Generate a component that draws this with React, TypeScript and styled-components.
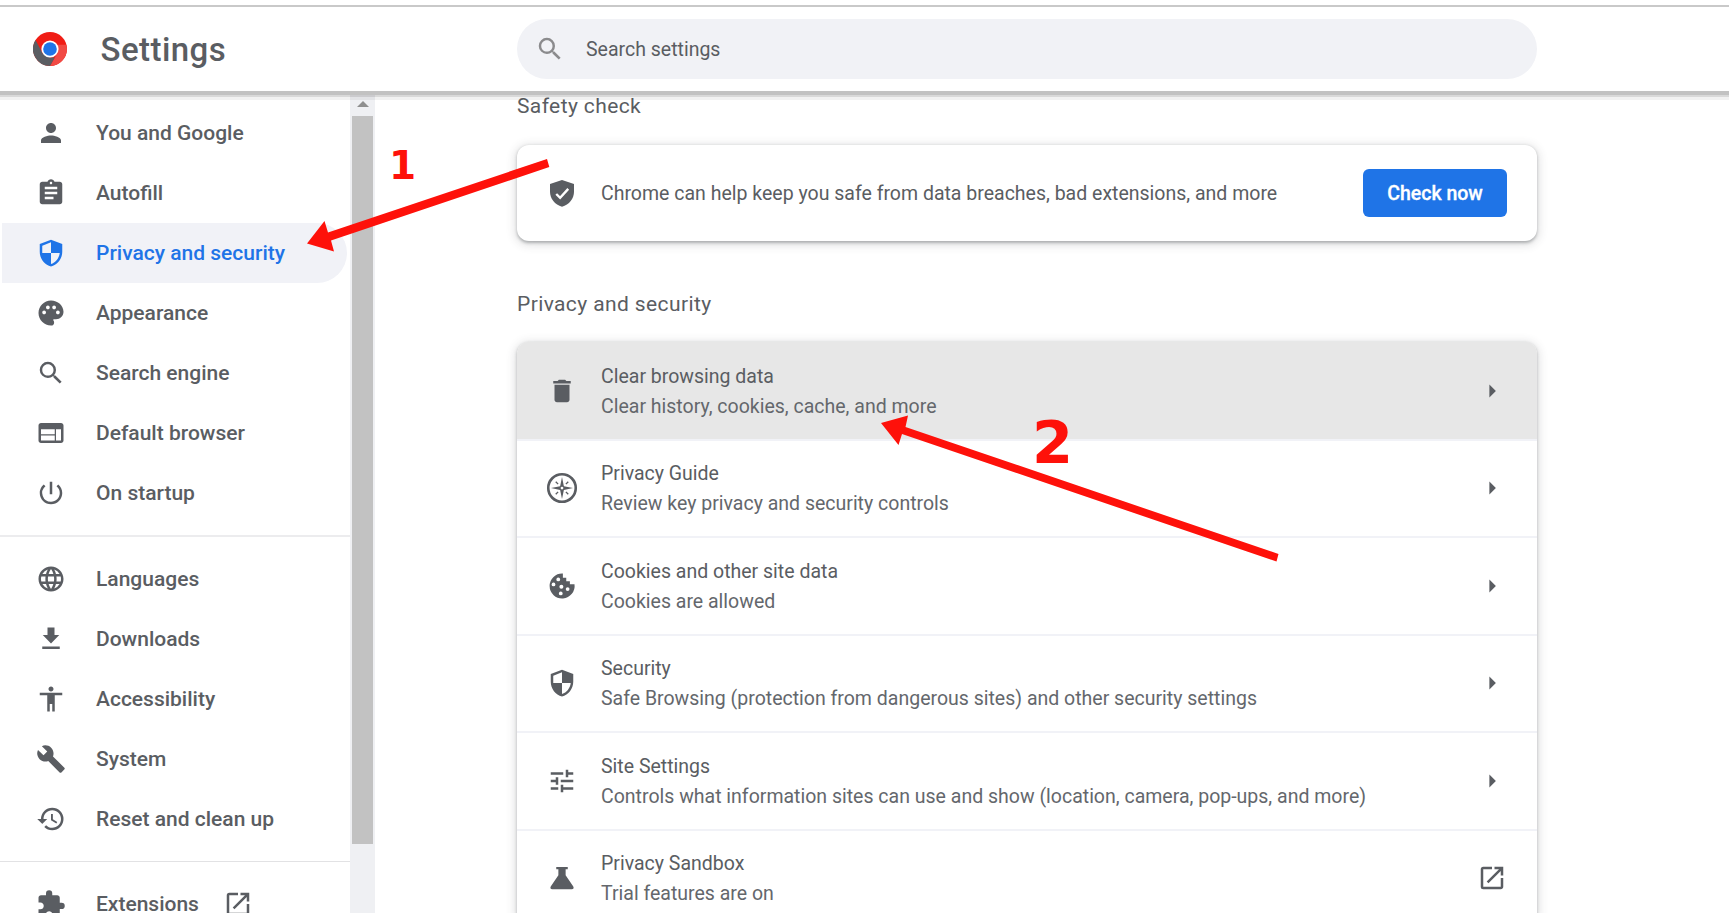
import React from 'react';
import styled, { createGlobalStyle } from 'styled-components';
import {
  MdPerson, MdAssignment, MdPalette, MdSearch, MdWeb, MdPowerSettingsNew, MdLanguage,
  MdAccessibility, MdBuild, MdHistory, MdExtension, MdLaunch, MdDelete, MdTune,
} from 'react-icons/md';

const ink = '#5a5d62';
const blue = '#1f74e7';
const red = '#fe110a';

const GlobalStyle = createGlobalStyle`
  * { box-sizing: border-box; }
  body { margin: 0; background: #fff; overflow: hidden; }
`;

const Page = styled.div`
  position: relative;
  width: 1729px;
  height: 913px;
  display: flex;
  flex-direction: column;
  overflow: hidden;
  padding-top: 5px;
  background: #fff;
  color: ${ink};
  font-family: Roboto, "Liberation Sans", sans-serif;
`;

const Header = styled.header`
  position: relative;
  z-index: 1;
  flex: none;
  height: 86px;
  display: flex;
  align-items: center;
  border-top: 2px solid #c9c9c9;
  background: #fff;
  box-shadow: 0 4px 0 #c2c2c2, 0 6px 0 rgba(0, 0, 0, 0.1), 0 9px 0 rgba(0, 0, 0, 0.05);
`;

const Brand = styled.div`
  width: 517px;
  display: flex;
  align-items: center;
  padding-left: 33px;
  gap: 33.5px;
`;

const Title = styled.h1`
  margin: 0;
  padding-top: 2px;
  font-size: 33px;
  font-weight: 500;
  line-height: 40px;
  letter-spacing: 0.45px;
`;

const SearchBox = styled.div`
  width: 1020px;
  height: 60px;
  border-radius: 30px;
  display: flex;
  align-items: center;
  gap: 21px;
  padding-left: 18px;
  background: #f1f2f6;
  font-size: 19.5px;
  svg { color: #8b8b8d; }
`;

const Body = styled.div`
  flex: 1;
  min-height: 0;
  display: flex;
`;

const Sidebar = styled.nav`
  width: 350px;
  flex: none;
  padding: 12px 3px 0 2px;
  overflow: hidden;
`;

const NavItem = styled.a<{ $active?: boolean }>`
  height: 60px;
  display: flex;
  align-items: center;
  gap: 30px;
  padding-left: 34px;
  border-radius: 0 30px 30px 0;
  background: ${p => (p.$active ? '#f1f2f7' : 'transparent')};
  color: ${p => (p.$active ? blue : ink)};
  font-size: 21px;
  font-weight: 500;
  line-height: 30px;
  white-space: nowrap;
`;

const NavExtra = styled.span`
  display: flex;
  margin-left: -6px;
`;

const NavLine = styled.div<{ $thick?: boolean }>`
  height: ${p => (p.$thick ? 2 : 1)}px;
  margin: 12px -3px 12px -2px;
  background: ${p => (p.$thick ? '#ececee' : '#e2e2e4')};
`;

const ScrollTrack = styled.div`
  width: 25px;
  flex: none;
  display: flex;
  flex-direction: column;
  align-items: center;
  padding: 10px 2px 0;
  background: #eff0f3;
`;

const ScrollArrow = styled.svg`
  width: 12px;
  height: 6px;
  margin-bottom: 9px;
`;

const ScrollThumb = styled.div`
  width: 21px;
  height: 728px;
  background: #c2c2c2;
`;

const Main = styled.main`
  width: 1020px;
  margin-left: 142px;
`;

const SectionTitle = styled.h2<{ $top: number; $bottom: number }>`
  margin: ${p => p.$top}px 0 ${p => p.$bottom}px;
  font-size: 21px;
  font-weight: 400;
  line-height: 30px;
  letter-spacing: 0.39px;
`;

const Card = styled.section`
  border-radius: 12px;
  overflow: hidden;
  background: #fff;
  box-shadow: 0 1.5px 3px rgba(60, 64, 67, 0.34), 0 2px 9px 3px rgba(60, 64, 67, 0.13);
`;

const CheckRow = styled.div`
  height: 96px;
  display: flex;
  align-items: center;
  padding: 0 30px;
  font-size: 19.5px;
`;

const CheckText = styled.span`
  padding-top: 1.5px;
`;

const IconSlot = styled.span`
  width: 30px;
  margin-right: 24px;
  display: flex;
`;

const Button = styled.button`
  width: 144px;
  height: 48px;
  margin-left: auto;
  padding: 1.5px 0 0;
  border: 0;
  border-radius: 6px;
  background: ${blue};
  color: #fff;
  font: 500 19.5px Roboto, sans-serif;
  -webkit-text-stroke: 0.3px #fff;
`;

const Row = styled.div<{ $hover?: boolean }>`
  height: 97px;
  display: flex;
  align-items: center;
  padding: 0 30px 0.5px;
  border-top: 2px solid #f1f2f7;
  background: ${p => (p.$hover ? '#e7e7e7' : '#fff')};

  &:first-child {
    padding-bottom: 1.5px;
    border-top-color: #e7e7e7;
  }

  &:nth-child(3),
  &:nth-child(5) {
    height: 98px;
  }
`;

const RowText = styled.div`
  flex: 1;
  padding-top: 1.5px;
  font-size: 19.5px;
  line-height: 30px;
`;

const Sub = styled.div`
  color: #64676c;
`;

const Annotations = styled.svg`
  position: absolute;
  inset: 0;
  z-index: 2;
  pointer-events: none;
`;

const Step = styled.span<{ $x: number; $y: number; $size: number }>`
  position: absolute;
  z-index: 2;
  left: ${p => p.$x}px;
  top: ${p => p.$y}px;
  color: ${red};
  font: bold ${p => p.$size}px/1 "DejaVu Sans", sans-serif;
`;

const Glyph = ({ children }: { children: React.ReactNode }) => (
  <svg width="30" height="30" viewBox="0 0 24 24" fill="currentColor" overflow="visible">{children}</svg>
);

const ShieldIcon = () => (
  <Glyph>
    <path fillRule="evenodd" d="M12 1.3 3 4.8V11c0 5.55 3.84 10.6 9 11.8 5.16-1.2 9-6.25 9-11.8V4.8zM12 12h7c-.53 4.1-3.28 7.7-7 8.8V12H5V6.2l7-2.8z" />
  </Glyph>
);

const ShieldCheckIcon = () => (
  <Glyph>
    <path d="M12 1.6 21.6 4.7V11c0 5.6-3.9 10.4-9.6 11.9C6.3 21.4 2.4 16.6 2.4 11V4.7z" />
    <path d="m7.4 12.8 3.1 3.1L17 8.7" fill="none" stroke="#fff" strokeWidth="1.9" />
  </Glyph>
);

const DownloadIcon = () => (
  <Glyph>
    <path d="M18.6 8.7h-3.8V2.7H9.2v6H5.4L12 15.6zM5 17.9v2.1h14v-2.1z" />
  </Glyph>
);

const CompassIcon = () => (
  <Glyph>
    <circle cx="12" cy="12" r="11" fill="none" stroke="currentColor" strokeWidth="2.1" />
    <path fillRule="evenodd" d="m12 3.2 1.5 7.3 7.3 1.5-7.3 1.5-1.5 7.3-1.5-7.3L3.2 12l7.3-1.5zm0 7.7a1.1 1.1 0 1 0 0 2.2 1.1 1.1 0 0 0 0-2.2z" />
    <path d="m7 7 1.9 1.9M17 7l-1.9 1.9M7 17l1.9-1.9M17 17l-1.9-1.9" stroke="currentColor" strokeWidth="1.1" />
  </Glyph>
);

const CookieIcon = () => (
  <Glyph>
    <path d="M12.7 2A10 10 0 1 0 22 10.6h-3.7V8.1h-2.9V5.3h-2.7z" />
    <g fill="#fff">
      <circle cx="9" cy="6.7" r="1.5" />
      <circle cx="5.2" cy="10.7" r="1.5" />
      <circle cx="11.5" cy="12.5" r="1.6" />
      <circle cx="16.5" cy="14.4" r="1.5" />
      <circle cx="11" cy="17.9" r="1.5" />
    </g>
  </Glyph>
);

const FlaskIcon = () => (
  <Glyph>
    <path d="M7.4 3.1h9.2V5h-1.7v4.7l6 8.8c.8 1.2.3 2.5-1.1 2.5H4.2c-1.4 0-1.9-1.3-1.1-2.5l6-8.8V5H7.4z" />
  </Glyph>
);

const ChromeLogo = () => (
  <svg width="34" height="34" viewBox="-17 -17 34 34">
    <circle r="17" fill="#f01d15" />
    <path d="M7.4-4.3H16.4A17 17 0 0 1 0 17L7.4 4.3z" fill="#f14a44" />
    <path d="M-14.5-8.9-7.4 4.3 0 8.6H4.8L0 17A17 17 0 0 1-14.5-8.9z" fill={ink} />
    <circle r="8.6" fill="#fff" />
    <circle r="6.8" fill={blue} />
  </svg>
);

const CaretIcon = () => (
  <Glyph><path d="M9.9 6.8 15.1 12l-5.2 5.2z" /></Glyph>
);

const groups = [
  [
    { label: 'You and Google', icon: <MdPerson size={30} /> },
    { label: 'Autofill', icon: <MdAssignment size={30} /> },
    { label: 'Privacy and security', icon: <ShieldIcon />, active: true },
    { label: 'Appearance', icon: <MdPalette size={30} /> },
    { label: 'Search engine', icon: <MdSearch size={30} /> },
    { label: 'Default browser', icon: <MdWeb size={30} /> },
    { label: 'On startup', icon: <MdPowerSettingsNew size={30} /> },
  ],
  [
    { label: 'Languages', icon: <MdLanguage size={30} /> },
    { label: 'Downloads', icon: <DownloadIcon /> },
    { label: 'Accessibility', icon: <MdAccessibility size={30} /> },
    { label: 'System', icon: <MdBuild size={30} /> },
    { label: 'Reset and clean up', icon: <MdHistory size={30} /> },
  ],
];

const rows = [
  { title: 'Clear browsing data', sub: 'Clear history, cookies, cache, and more', icon: <MdDelete size={30} />, end: <CaretIcon /> },
  { title: 'Privacy Guide', sub: 'Review key privacy and security controls', icon: <CompassIcon />, end: <CaretIcon /> },
  { title: 'Cookies and other site data', sub: 'Cookies are allowed', icon: <CookieIcon />, end: <CaretIcon /> },
  { title: 'Security', sub: 'Safe Browsing (protection from dangerous sites) and other security settings', icon: <ShieldIcon />, end: <CaretIcon /> },
  { title: 'Site Settings', sub: 'Controls what information sites can use and show (location, camera, pop-ups, and more)', icon: <MdTune size={30} />, end: <CaretIcon /> },
  { title: 'Privacy Sandbox', sub: 'Trial features are on', icon: <FlaskIcon />, end: <MdLaunch size={30} /> },
];

export default function App() {
  return (
    <Page>
      <GlobalStyle />
      <Header>
        <Brand>
          <ChromeLogo />
          <Title>Settings</Title>
        </Brand>
        <SearchBox>
          <MdSearch size={30} />
          Search settings
        </SearchBox>
      </Header>
      <Body>
        <Sidebar>
          {groups.map((items, g) => (
            <React.Fragment key={g}>
              {items.map((it: { label: string; icon: React.ReactNode; active?: boolean }) => (
                <NavItem key={it.label} $active={it.active}>{it.icon}{it.label}</NavItem>
              ))}
              <NavLine $thick={g === 0} />
            </React.Fragment>
          ))}
          <NavItem>
            <MdExtension size={30} />
            Extensions
            <NavExtra><MdLaunch size={30} /></NavExtra>
          </NavItem>
        </Sidebar>
        <ScrollTrack>
          <ScrollArrow viewBox="0 0 12 6"><path d="M6 0 12 6H0z" fill="#8f8f8f" /></ScrollArrow>
          <ScrollThumb />
        </ScrollTrack>
        <Main>
          <SectionTitle $top={0} $bottom={23.5}>Safety check</SectionTitle>
          <Card>
            <CheckRow>
              <IconSlot><ShieldCheckIcon /></IconSlot>
              <CheckText>Chrome can help keep you safe from data breaches, bad extensions, and more</CheckText>
              <Button>Check now</Button>
            </CheckRow>
          </Card>
          <SectionTitle $top={48.5} $bottom={23}>Privacy and security</SectionTitle>
          <Card>
            {rows.map((r, i) => (
              <Row key={r.title} $hover={i === 0}>
                <IconSlot>{r.icon}</IconSlot>
                <RowText>
                  <div>{r.title}</div>
                  <Sub>{r.sub}</Sub>
                </RowText>
                {r.end}
              </Row>
            ))}
          </Card>
        </Main>
      </Body>
      <Annotations width="1729" height="913" fill={red}>
        <path d="M307 243.5 324.5 221 328 232.5 547 159 549.3 167 331 240.5 334 251.5z" />
        <path d="M881 423 908 415.500 905.500 427 1278.5 554 1276.5 561.5 902 434 898.5 445z" />
      </Annotations>
      <Step $x={389} $y={146} $size={39}>1</Step>
      <Step $x={1032} $y={413} $size={59}>2</Step>
    </Page>
  );
}
